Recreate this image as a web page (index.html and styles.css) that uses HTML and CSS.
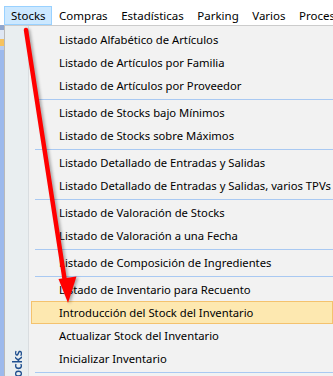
FILE: index.html
```html
<!DOCTYPE html>
<html lang="es">
<head>
    <meta charset="UTF-8">
    <title>Stocks</title>
    <link rel="stylesheet" href="styles.css">
</head>
<body>
    <div class="menubar">
        <span class="top-item active">Stocks</span>
        <span class="top-item">Compras</span>
        <span class="top-item">Estadísticas</span>
        <span class="top-item">Parking</span>
        <span class="top-item">Varios</span>
        <span class="top-item">Procesos</span>
    </div>

    <div class="workspace">
        <!-- bit of the toolbar behind the menu -->
        <div class="app-edge">
            <div class="edge-a"></div>
            <div class="edge-b"></div>
            <div class="edge-c"></div>
            <div class="edge-d"></div>
        </div>

        <div class="dropdown">
            <div class="sidebar">
                <span class="sidebar-label">Stocks</span>
            </div>
            <ul class="items">
                <li>Listado Alfabético de Artículos</li>
                <li>Listado de Artículos por Familia</li>
                <li>Listado de Artículos por Proveedor</li>
                <li class="sep"></li>
                <li>Listado de Stocks bajo Mínimos</li>
                <li>Listado de Stocks sobre Máximos</li>
                <li class="sep"></li>
                <li>Listado Detallado de Entradas y Salidas</li>
                <li>Listado Detallado de Entradas y Salidas, varios TPVs</li>
                <li class="sep"></li>
                <li>Listado de Valoración de Stocks</li>
                <li>Listado de Valoración a una Fecha</li>
                <li class="sep"></li>
                <li>Listado de Composición de Ingredientes</li>
                <li class="sep"></li>
                <li>Listado de Inventario para Recuento</li>
                <li class="hover">Introducción del Stock del Inventario</li>
                <li>Actualizar Stock del Inventario</li>
                <li>Inicializar Inventario</li>
                <li class="sep"></li>
            </ul>
        </div>
    </div>

    <!-- annotation arrow drawn over the screenshot -->
    <svg class="arrow" width="333" height="376" viewBox="0 0 333 376">
        <line x1="26" y1="30" x2="65" y2="282" stroke="#ff0000" stroke-width="4.5" stroke-linecap="round"/>
        <polygon points="68,303 58.5,279 76.5,276.5" fill="#ff0000"/>
    </svg>
</body>
</html>
```

FILE: styles.css
```css
:root {
    --bar-bg: #ffffff;
    --menu-bg: #f2f2f2;
    --side-bg: #e9eef0;
    --sep: #a9c9f2;
    --hot-bg: #fde8b0;
    --hot-border: #f4c26e;
    --sel-bg: #cce8ff;
    --sel-border: #99d1ff;
}

html, body {
    margin: 0;
    height: 100%;
    overflow: hidden;
}

body {
    font-family: "Noto Sans", "Open Sans", sans-serif;
    font-size: 11.5px;
    color: #000;
    background: var(--bar-bg);
    position: relative;
}

/* top menu bar */
.menubar {
    height: 25px;
    box-sizing: border-box;
    padding: 6px 0 0 4px;
    display: flex;
    align-items: flex-start;
}

.top-item {
    flex: none;
    height: 17px;
    line-height: 17px;
    padding: 0 5.5px 0 6px;
    border: 1px solid transparent;
    white-space: nowrap;
}
.top-item.active {
    background: var(--sel-bg);
    border-color: var(--sel-border);
}

.workspace {
    display: flex;
    height: 394px;
}

/* the blue toolbar edge peeking out on the left */
.app-edge {
    flex: none;
    width: 4px;
    display: flex;
    flex-direction: column;
    background: #9cb9ec;
}
.edge-a { height: 5px; background: #8ea6cf; }
.edge-b { height: 9px; background: #dfe7f4; }
.edge-c { height: 7px; background: #f6c25e; }
.edge-d { height: 4px; background: #b8ccf0; }

.dropdown {
    flex: 1;
    min-width: 0;
    display: flex;
    border-top: 1px solid #cccccc;
    border-left: 1px solid #b9b9b9;
    background: var(--menu-bg);
}

.sidebar {
    flex: none;
    width: 23px;
    background: var(--side-bg);
    border-right: 1px solid #d9dde0;
    display: flex;
    flex-direction: column;
    justify-content: flex-end;
    align-items: center;
    padding-bottom: 30px;
}
.sidebar-label {
    writing-mode: vertical-rl;
    transform: rotate(180deg);
    font-size: 12.5px;
    font-weight: 600;
    color: #1f4f8f;
    margin-left: 1px;
}

.items {
    flex: 1;
    list-style: none;
    margin: 0;
    padding: 2px 0 0 0;
    font-size: 11.25px;
}
.items li {
    height: 21px;
    line-height: 21px;
    margin-left: 2px;
    padding-left: 27px;
    border: 1px solid transparent;
    white-space: nowrap;
}
.items li.hover {
    background: var(--hot-bg);
    border-color: var(--hot-border);
}
.items li.sep {
    height: 0;
    padding: 0;
    border: 0;
    margin: 2px 0 1px 6px;
    border-top: 1px solid var(--sep);
}

.arrow {
    position: absolute;
    top: 0;
    left: 0;
    pointer-events: none;
    filter: drop-shadow(2px 1px 1.5px rgba(0, 0, 0, 0.3));
}
```
